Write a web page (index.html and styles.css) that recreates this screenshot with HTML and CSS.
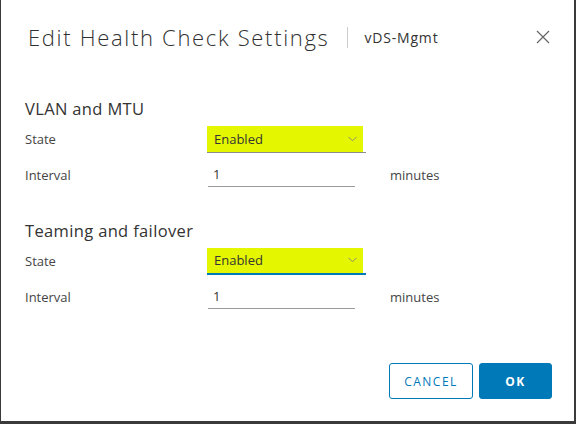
FILE: index.html
```html
<!DOCTYPE html>
<html>
<head>
<meta charset="utf-8">
<link rel="stylesheet" href="styles.css">
</head>
<body>
<div class="modal">
  <div class="header">
    <h1 class="title">Edit Health Check Settings</h1>
    <span class="sep"></span>
    <span class="subtitle">vDS-Mgmt</span>
    <span class="close">
      <svg width="14" height="14" viewBox="0 0 14 14"><path d="M1 1L13 13M13 1L1 13" stroke="#666" stroke-width="1.2" fill="none"/></svg>
    </span>
  </div>
  <div class="body">
    <section class="group">
      <h2 class="group-title">VLAN and MTU</h2>
      <div class="row">
        <label class="lbl">State</label>
        <div class="select grey">
          <span>Enabled</span>
          <svg class="chev" width="9" height="6" viewBox="0 0 9 6"><path d="M0.5 0.8L4.5 4.8L8.5 0.8" stroke="#8a8f6a" stroke-width="1" fill="none"/></svg>
        </div>
      </div>
      <div class="row">
        <label class="lbl">Interval</label>
        <div class="input">1</div>
        <span class="unit">minutes</span>
      </div>
    </section>
    <section class="group second">
      <h2 class="group-title">Teaming and failover</h2>
      <div class="row">
        <label class="lbl">State</label>
        <div class="select blue">
          <span>Enabled</span>
          <svg class="chev" width="9" height="6" viewBox="0 0 9 6"><path d="M0.5 0.8L4.5 4.8L8.5 0.8" stroke="#8a8f6a" stroke-width="1" fill="none"/></svg>
        </div>
      </div>
      <div class="row">
        <label class="lbl">Interval</label>
        <div class="input">1</div>
        <span class="unit">minutes</span>
      </div>
    </section>
  </div>
  <div class="footer">
    <button class="btn outline">CANCEL</button>
    <button class="btn primary">OK</button>
  </div>
</div>
</body>
</html>
```
FILE: styles.css
```css
html, body {
  margin: 0;
  padding: 0;
}
body {
  background: #3a3a3a;
  width: 576px;
  height: 424px;
  font-family: "Open Sans", "Liberation Sans", sans-serif;
  color: #333;
}
.modal {
  margin-left: 1px;
  width: 573px;
  height: 421px;
  background: #fff;
  box-sizing: border-box;
  padding: 0 24px 0 24px;
  position: relative;
}
.header {
  display: flex;
  align-items: center;
  height: 74px;
  padding-left: 3px;
  box-sizing: border-box;
}
.title {
  margin: 0;
  font-size: 22px;
  font-weight: 300;
  color: #313131;
  letter-spacing: 1.68px;
  line-height: 26px;
}
.sep {
  width: 1px;
  height: 21px;
  background: #ccc;
  margin-left: 17px;
  margin-right: 17px;
}
.subtitle {
  font-size: 14px;
  font-weight: 500;
  color: #333;
  letter-spacing: 0.8px;
}
.close {
  margin-left: auto;
  margin-right: 0;
  display: flex;
  width: 14px;
  height: 14px;
}
.body {
  padding-top: 24px;
}
.group-title {
  margin: 0;
  font-size: 16.5px;
  font-weight: 400;
  color: #333;
  line-height: 22px;
  height: 22px;
  letter-spacing: 0.35px;
}
.group.second {
  margin-top: 27px;
}
.row {
  display: flex;
  align-items: center;
  height: 36px;
}
.group .row:first-of-type {
  margin-top: 1px;
}
.lbl {
  width: 182px;
  font-size: 13px;
  color: #454545;
}
.select {
  width: 159px;
  height: 27px;
  box-sizing: border-box;
  background: linear-gradient(to right, #e5f700 156px, transparent 156px);
  display: flex;
  align-items: center;
  padding-left: 7px;
  padding-right: 9px;
  font-size: 13px;
  color: #333;
  position: relative;
}
.select.grey {
  border-bottom: 1px solid #8c8c8c;
}
.select.blue {
  border-bottom: 2px solid #0079b8;
}
.select span {
  flex: 1;
}
.chev {
  display: block;
}
.input {
  width: 147px;
  height: 24px;
  box-sizing: border-box;
  border-bottom: 1px solid #9a9a9a;
  margin-left: 1px;
  padding-left: 5px;
  font-size: 13px;
  line-height: 22px;
  color: #333;
}
.unit {
  margin-left: 35px;
  font-size: 13px;
  color: #454545;
}
.footer {
  position: absolute;
  right: 22px;
  bottom: 22px;
  display: flex;
  gap: 6px;
}
.btn {
  height: 36px;
  border-radius: 3px;
  font-family: "Open Sans", "Liberation Sans", sans-serif;
  font-size: 12px;
  letter-spacing: 1.5px;
  box-sizing: border-box;
  margin: 0;
  cursor: pointer;
}
.btn.outline {
  width: 84px;
  background: #fff;
  border: 1px solid #0079b8;
  color: #0079b8;
  font-weight: 500;
}
.btn.primary {
  width: 73px;
  background: #0079b8;
  border: 1px solid #0079b8;
  color: #fff;
  font-weight: 700;
}
```
